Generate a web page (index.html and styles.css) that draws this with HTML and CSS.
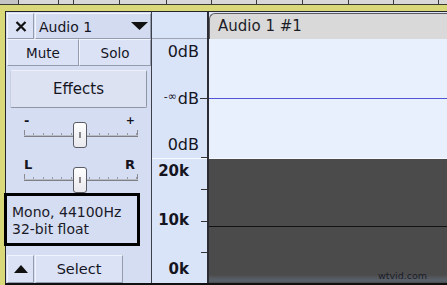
FILE: index.html
```html
<!DOCTYPE html>
<html>
<head>
<meta charset="utf-8">
<link rel="stylesheet" href="styles.css">
</head>
<body>
<div class="screen">
  <div class="topruler">
    <span class="c18"></span><span class="c40"></span><span class="c15"></span><span class="c46"></span><span class="c47"></span><span class="c45"></span><span class="c45"></span><span class="c46"></span><span class="c46"></span><span class="c45"></span><span class="c45"></span><span class="crest"></span>
  </div>
  <div class="track">
    <div class="hl">
      <div class="body">
        <div class="panel">
          <div class="row1">
            <div class="btn close"><svg width="12" height="11" viewBox="0 0 12 11"><path d="M1.5 1 L10.5 10 M10.5 1 L1.5 10" stroke="#111" stroke-width="2.2" fill="none"/></svg></div>
            <div class="btn name"><span>Audio 1</span><svg width="17" height="8" viewBox="0 0 17 8"><polygon points="0,0 17,0 8.5,8" fill="#111"/></svg></div>
          </div>
          <div class="row2">
            <div class="btn half">Mute</div>
            <div class="btn half">Solo</div>
          </div>
          <div class="effects">Effects</div>
          <div class="slider">
            <div class="sl-labels"><span class="minus">-</span><span class="plus">+</span></div>
            <div class="sl-track"></div>
            <div class="thumb"></div>
          </div>
          <div class="slider">
            <div class="sl-labels"><span>L</span><span>R</span></div>
            <div class="sl-track"></div>
            <div class="thumb pan"></div>
          </div>
          <div class="info">Mono, 44100Hz<br>32-bit float</div>
          <div class="row-bottom">
            <div class="btn collapse"><svg width="14" height="8" viewBox="0 0 14 8"><polygon points="0,8 14,8 7,0" fill="#111"/></svg></div>
            <div class="btn select">Select</div>
          </div>
        </div>
        <div class="ruler">
          <div class="r-head"></div>
          <div class="r-db">
            <div class="lbl">0dB</div>
            <div class="lbl mid"><span class="inf">-∞</span>dB<i class="tick"></i></div>
            <div class="lbl">0dB</div>
          </div>
          <div class="r-hz">
            <div class="lbl">20k</div>
            <div class="lbl">10k</div>
            <div class="lbl">0k</div>
          </div>
        </div>
        <div class="wave">
          <div class="tab">Audio 1 #1</div>
          <div class="wv"></div>
          <div class="spec"></div>
        </div>
      </div>
    </div>
  </div>
  <div class="callout"></div>
  <div class="wm">wtvid.com</div>
</div>
</body>
</html>
```
FILE: styles.css
```css
* { box-sizing: border-box; margin: 0; padding: 0; }
html, body { width: 447px; height: 285px; overflow: hidden; background: #d6d6d6; }
body { font-family: "DejaVu Sans", sans-serif; color: #15151f; }

.screen { position: relative; width: 447px; height: 285px; display: flex; flex-direction: column; }

.topruler { height: 4px; display: flex; background: #d8d8d8; flex: none; }
.topruler span { flex: none; height: 4px; border-left: 1px solid #3c3c3c; }
.topruler span:first-child { border-left: 0; background: #c4c4c4; }
.c18 { width: 18px; } .c40 { width: 40px; } .c15 { width: 15px; }
.c45 { width: 45px; } .c46 { width: 46px; } .c47 { width: 47px; }
.crest { flex: 1 !important; }

.track { flex: 1; min-height: 0; border-top: 1px solid #3a3a30; display: flex; flex-direction: column; }
.hl { flex: 1; min-height: 0; display: flex; border-top: 6px solid #d9d979; border-left: 5px solid #d9d979; }
.body { flex: 1; min-width: 0; display: flex; border-top: 1px solid #25252c; border-left: 1px solid #25252c; border-bottom: 2px solid #111; }

/* control panel */
.panel { width: 146px; flex: none; background: #d5ddf2; border-right: 1px solid #3d3f4a; display: flex; flex-direction: column; }
.btn { background: #dbe2f5; border: 1px solid; border-color: #f1f4fd #949cb0 #949cb0 #f1f4fd; display: flex; align-items: center; justify-content: center; }
.row1 { display: flex; height: 26px; margin-top: 1px; padding-left: 1px; gap: 1px; }
.close { width: 27px; flex: none; }
.name { flex: 1; justify-content: space-between; padding: 0 2px 0 3px; background: #d3dbf1; font-size: 14px; }
.name span { padding-top: 1px; }
.row2 { display: flex; height: 27px; padding-left: 1px; }
.half { flex: 1; font-size: 13.5px; }

.effects { margin: 4px 4px 0 4px; height: 38px; display: flex; align-items: center; justify-content: center; font-size: 15px; background: #dce2f1; border: 1px solid; border-color: #eef1f9 #8e95a6 #8e95a6 #c8cfdf; border-radius: 2px; }

.slider { position: relative; height: 44px; }
.sl-labels { display: flex; justify-content: space-between; margin-top: 6px; height: 14px; line-height: 14px; padding: 0 16px 0 18px; font-size: 13px; font-weight: bold; }
.sl-labels .minus { font-size: 13px; }
.sl-labels .plus { font-size: 11px; }
.sl-track { margin: 2px 13px 0 18px; height: 7px;
  background:
    linear-gradient(#7e7e84, #7e7e84) left bottom / 100% 1px no-repeat,
    linear-gradient(#b8bcc6, #b8bcc6) left 0 bottom 1px / 100% 1px no-repeat,
    linear-gradient(#8a8a90, #8a8a90) left top / 1px 100% no-repeat,
    linear-gradient(#8a8a90, #8a8a90) right top / 1px 100% no-repeat,
    repeating-linear-gradient(90deg, #9a9ca4 0 1px, transparent 1px 9.33px) left 0 top 3px / 100% 3px no-repeat; }
.thumb { position: absolute; left: 67px; top: 14px; width: 14px; height: 26px; border: 1px solid #5c5c64; border-radius: 3px; background: linear-gradient(#ffffff, #e9e9ee); }
.thumb.pan { top: 15px; }
.thumb::after { content: ""; position: absolute; left: 5px; top: 9px; width: 2px; height: 6px; background: #8a8a90; }

.info { margin-top: 8px; padding-left: 6px; font-size: 14px; line-height: 17px; color: #1a1a28; }

.row-bottom { margin-top: auto; display: flex; height: 28px; padding-left: 1px; gap: 1px; }
.collapse { width: 27px; flex: none; }
.select { width: 88px; flex: none; font-size: 14.5px; }

/* vertical ruler */
.ruler { width: 57px; flex: none; background: #dae4f9; border-right: 2px solid #2c2d34; display: flex; flex-direction: column; }
.r-head { height: 27px; border-bottom: 1px solid #9ca4b6; flex: none; }
.r-db { height: 120px; flex: none; display: flex; flex-direction: column; justify-content: space-between; padding: 5px 8px 5px 0; text-align: right; border-bottom: 1px solid #f6f9ff;
  background: linear-gradient(#333, #333) right bottom / 6px 1px no-repeat; }
.r-db .lbl { font-size: 16px; line-height: 16px; }
.r-db .mid { margin-right: -8px; display: flex; justify-content: flex-end; align-items: center; }
.inf { font-size: 11px; line-height: 11px; align-self: flex-start; margin-right: 1px; }
.tick { display: inline-block; width: 7px; height: 1px; background: #333; margin-left: 1px; }
.r-hz { flex: 1; display: flex; flex-direction: column; justify-content: space-between; padding: 4px 18px 6px 0; text-align: right;
  background: repeating-linear-gradient(to bottom, transparent 0 30.5px, #333 30.5px 31.5px) right top / 6px 100% no-repeat; }
.r-hz .lbl { font-size: 15px; line-height: 16px; font-weight: bold; }

/* waveform */
.wave { flex: 1; min-width: 0; display: flex; flex-direction: column; background: #dde5f6; }
.tab { flex: none; height: 26px; margin-top: 1px; border-top: 1px solid #5a5a5e; border-left: 1px solid #5a5a5e; border-top-left-radius: 6px; background: #d9d9d9; padding-left: 8px; font-size: 15px; line-height: 24px; color: #1d1d28; }
.wv { flex: none; height: 120px; background: linear-gradient(transparent 0 59px, #5454d6 59px 60px, transparent 60px) #e9f0fd; border-bottom: 1px solid #f6f9ff; }
.spec { flex: 1; background:
    linear-gradient(transparent 0 67px, #121212 67px 68px, transparent 68px),
    linear-gradient(to top, rgba(0,0,0,0) 0, rgba(120,140,170,0.35) 2px, rgba(120,140,170,0.15) 6px, rgba(0,0,0,0) 8px),
    #4b4b4b; }

/* overlays */
.callout { position: absolute; left: 4px; top: 193px; width: 136px; height: 53px; border: 3px solid #000; }
.wm { position: absolute; left: 378px; top: 270px; font-size: 9.5px; line-height: 11px; color: #1b1d2a; }
```
